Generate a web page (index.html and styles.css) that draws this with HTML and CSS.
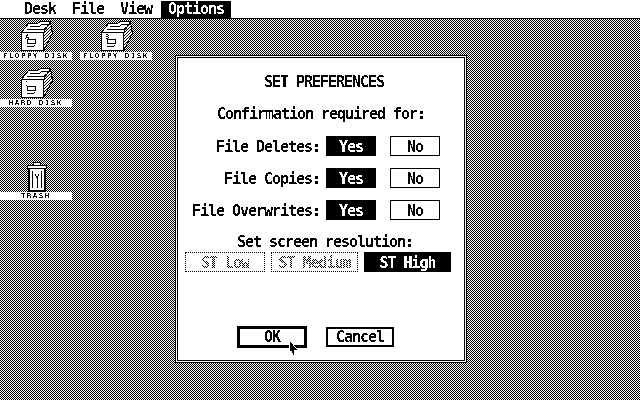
FILE: index.html
```html
<!DOCTYPE html>
<html lang="en">
  <head>
    <meta charset="UTF-8" />
    <title>Set Preferences</title>
    <link rel="stylesheet" href="styles.css">
  </head>
  <body>
    <!-- hard 1-bit look for the text -->
    <svg class="defs" width="0" height="0">
      <filter id="mono" color-interpolation-filters="sRGB" x="0" y="0" width="100%" height="100%">
        <feColorMatrix type="saturate" values="0" />
        <feComponentTransfer>
          <feFuncR type="discrete" tableValues="0 1" />
          <feFuncG type="discrete" tableValues="0 1" />
          <feFuncB type="discrete" tableValues="0 1" />
        </feComponentTransfer>
      </filter>
      <!-- for the tiny labels: anything not near white goes black -->
      <filter id="mono-thin" color-interpolation-filters="sRGB" x="0" y="0" width="100%" height="100%">
        <feColorMatrix type="saturate" values="0" />
        <feComponentTransfer>
          <feFuncR type="discrete" tableValues="0 0 1" />
          <feFuncG type="discrete" tableValues="0 0 1" />
          <feFuncB type="discrete" tableValues="0 0 1" />
        </feComponentTransfer>
      </filter>
      <pattern id="stripes" width="3" height="3" patternUnits="userSpaceOnUse">
        <rect width="3" height="3" fill="#fff" />
        <rect x="2" y="0" width="1" height="1" fill="#000" />
        <rect x="1" y="1" width="1" height="1" fill="#000" />
        <rect x="0" y="2" width="1" height="1" fill="#000" />
      </pattern>
      <symbol id="folder" viewBox="0 0 36 32">
        <path d="M25.5 12.5 L32.5 1.5 L34.5 13.5 L25.5 30.5 Z" fill="url(#stripes)" stroke="#000" />
        <path d="M3.5 12.5 L10.5 3.5 H19.5 L22.5 1.5 H32.5 L25.5 12.5 Z" fill="#fff" stroke="#000" />
        <path d="M12 6.5 H21 L24 4.5 H30 M9 9.5 H26 L28 7.5" fill="none" stroke="#000" />
        <rect x="3.5" y="12.5" width="22" height="18" fill="#fff" stroke="#000" />
        <path d="M9.5 19.5 H17.5 V23.5 H9.5 Z M9 26.5 H15 L17 25.5" fill="none" stroke="#000" />
      </symbol>
    </svg>

    <div class="screen">
      <div class="menu-bar">
        <span class="menu-item">Desk</span>
        <span class="menu-item">File</span>
        <span class="menu-item">View</span>
        <span class="menu-item active">Options</span>
      </div>

      <div class="desktop">
        <div class="icon icon-a">
          <svg class="glyph" width="36" height="32" shape-rendering="crispEdges">
            <use href="#folder" />
            <text class="drive" x="7" y="19">A</text>
          </svg>
          <div class="icon-label">FLOPPY DISK</div>
        </div>
        <div class="icon icon-b">
          <svg class="glyph" width="36" height="32" shape-rendering="crispEdges">
            <use href="#folder" />
            <text class="drive" x="7" y="19">B</text>
          </svg>
          <div class="icon-label">FLOPPY DISK</div>
        </div>
        <div class="icon icon-c">
          <svg class="glyph" width="36" height="32" shape-rendering="crispEdges">
            <use href="#folder" />
            <text class="drive" x="7" y="19">C</text>
          </svg>
          <div class="icon-label">HARD DISK</div>
        </div>
        <div class="icon icon-trash">
          <svg class="glyph" width="36" height="32" shape-rendering="crispEdges">
            <path d="M15.5 2.5 H22.5 V5.5 H15.5 Z" fill="#fff" stroke="#000" />
            <path d="M9.5 5.5 H28.5 V8.5 H9.5 Z" fill="#fff" stroke="#000" />
            <rect x="10" y="8" width="18" height="24" fill="#000" />
            <rect x="12" y="9" width="14" height="21" fill="#fff" />
            <path d="M14.5 11 V28 M23.5 11 V28 M19 18 V28 M17 14 L19 18 L21 14" fill="none" stroke="#000" />
          </svg>
          <div class="icon-label">TRASH</div>
        </div>

        <div class="dialog">
          <div class="dialog-inner">
            <div class="title">SET PREFERENCES</div>
            <div class="subtitle">Confirmation required for:</div>

            <div class="row first">
              <span class="row-label">File Deletes:</span>
              <span class="btn selected">Yes</span>
              <span class="btn no">No</span>
            </div>
            <div class="row">
              <span class="row-label">File Copies:</span>
              <span class="btn selected">Yes</span>
              <span class="btn no">No</span>
            </div>
            <div class="row">
              <span class="row-label">File Overwrites:</span>
              <span class="btn selected">Yes</span>
              <span class="btn no">No</span>
            </div>

            <div class="res-title">Set screen resolution:</div>
            <div class="res-row">
              <span class="btn res-low disabled"><span class="grey">ST Low</span></span>
              <span class="btn res-wide disabled"><span class="grey">ST Medium</span></span>
              <span class="btn res-wide selected">ST High</span>
            </div>

            <div class="actions">
              <span class="btn btn-ok">OK</span>
              <span class="btn btn-cancel">Cancel</span>
            </div>
          </div>
        </div>
      </div>

      <!-- mouse pointer -->
      <svg class="cursor" width="12" height="18" shape-rendering="crispEdges">
        <path d="M1 0 L10 10 H6 L7 15 L5 15 L3 11 L1 14 Z" fill="#000" stroke="#fff" stroke-width="0.6" />
      </svg>
    </div>
  </body>
</html>
```

FILE: styles.css
```css
* {
  margin: 0;
  padding: 0;
  box-sizing: border-box;
}

body {
  width: 640px;
  height: 400px;
  overflow: hidden;
  background: #fff;
  color: #000;
  font-family: "DejaVu Sans Mono", monospace;
  font-weight: bold;
  font-size: 15px;
  letter-spacing: -1.03px;
  line-height: 16px;
}

.defs {
  position: absolute;
}

.screen {
  position: relative;
  width: 640px;
  height: 400px;
  display: flex;
  flex-direction: column;
  filter: url(#mono);
}

/* menu bar */
.menu-bar {
  display: flex;
  height: 19px;
  padding: 1px 0 0 16px;
  background: #fff;
  border-bottom: 1px solid #000;
}

.menu-item {
  height: 17px;
  margin: 0 1px;
  padding: 0 7px;
}

.menu-item.active {
  background: #000;
  color: #fff;
}

/* desktop, 50% dither */
.desktop {
  position: relative;
  flex: 1;
  background: repeating-conic-gradient(#000 0 25%, #fff 0 50%) 0 0 / 2px 2px;
}

.icon {
  position: absolute;
  width: 72px;
  display: flex;
  flex-direction: column;
  align-items: center;
}

.icon-a {
  left: 0;
  top: 1px;
}

.icon-b {
  left: 80px;
  top: 1px;
}

.icon-c {
  left: 0;
  top: 48px;
}

.icon-trash {
  left: 0;
  top: 141px;
}

.glyph {
  display: block;
}

.drive {
  font-weight: normal;
  font-size: 7px;
  letter-spacing: 0;
  filter: url(#mono-thin);
}

.icon-label {
  width: 72px;
  height: 8px;
  background: #fff;
  text-align: center;
  font-weight: normal;
  font-size: 7px;
  line-height: 8px;
  letter-spacing: 1.8px;
  filter: url(#mono-thin);
}

/* dialog */
.dialog {
  position: absolute;
  left: 175px;
  top: 36px;
  width: 292px;
  height: 308px;
  padding: 1px;
  background: #fff;
  border: 1px solid #000;
}

.dialog-inner {
  height: 100%;
  border: 1px solid #000;
  display: flex;
  flex-direction: column;
}

.title {
  margin-top: 16px;
  padding-left: 6px;
  text-align: center;
}

.subtitle {
  margin-top: 16px;
  text-align: center;
}

.row {
  display: flex;
  align-items: center;
  margin-top: 12px;
}

.row.first {
  margin-top: 14px;
}

.row-label {
  width: 142px;
  padding-top: 1px;
  text-align: right;
}

.btn {
  display: flex;
  align-items: center;
  justify-content: center;
  height: 20px;
  width: 50px;
  margin-left: 6px;
  padding-top: 1px;
  border: 1px solid #000;
  background: #fff;
}

.btn.selected {
  background: #000;
  color: #fff;
}

.btn.no {
  margin-left: 14px;
}

.res-title {
  margin-top: 13px;
  padding-left: 8px;
  padding-top: 1px;
  text-align: center;
}

.res-row {
  display: flex;
  margin-top: 2px;
  padding-left: 1px;
}

.res-low {
  width: 80px;
}

.res-wide {
  width: 87px;
}

.btn.disabled {
  border: 1px dotted #000;
}

/* greyed out text: dither shows through the glyphs */
.grey {
  color: transparent;
  background: repeating-conic-gradient(#000 0 25%, #fff 0 50%) 0 0 / 2px 2px;
  -webkit-background-clip: text;
  background-clip: text;
}

.actions {
  display: flex;
  align-items: center;
  margin-top: 54px;
  padding-left: 59px;
}

.btn-ok {
  width: 70px;
  height: 22px;
  margin-left: 0;
  padding-top: 0;
  border-width: 3px;
}

.btn-cancel {
  width: 68px;
  height: 20px;
  margin-left: 19px;
  padding-top: 0;
  border-width: 2px;
}

.cursor {
  position: absolute;
  left: 288px;
  top: 340px;
}
```
